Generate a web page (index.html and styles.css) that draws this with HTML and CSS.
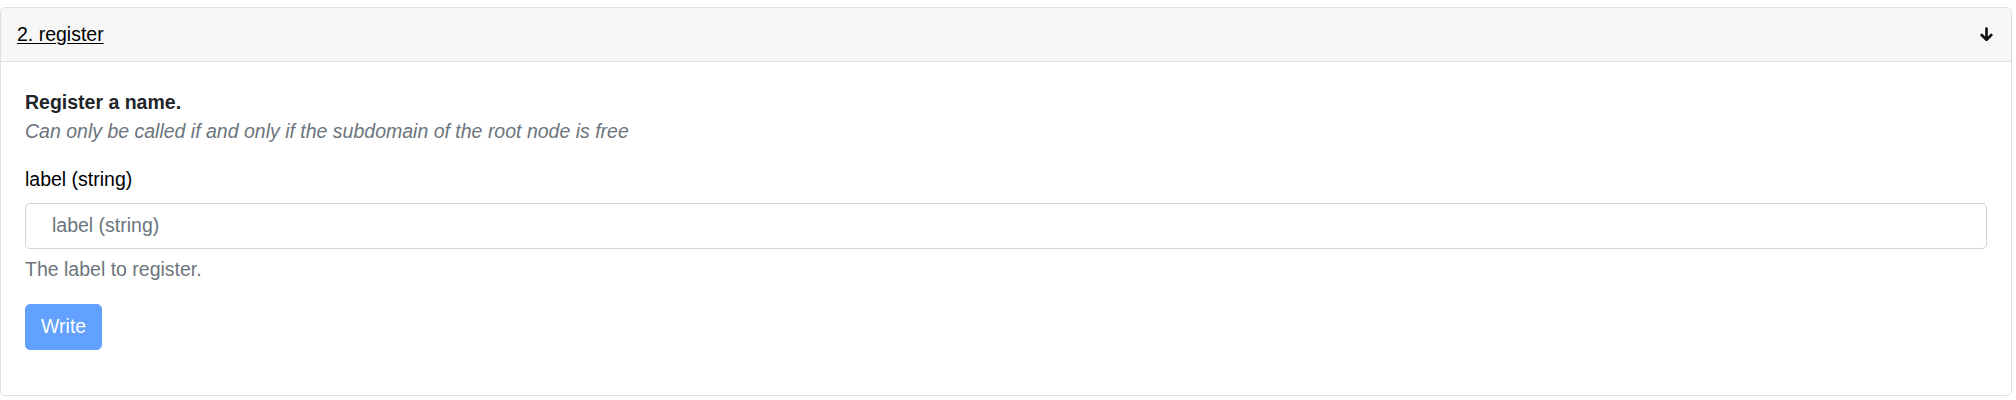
FILE: index.html
```html
<!DOCTYPE html>
<html lang="en">
<head>
<meta charset="utf-8">
<title>register</title>
<link rel="stylesheet" href="styles.css">
</head>
<body>
<div class="page">
  <div class="card">
    <div class="card-header">
      <a class="title" href="#">2. register</a>
      <svg class="arrow" width="15" height="15" viewBox="0 0 14 14" aria-hidden="true">
        <path d="M7 1.5 V12 M2.5 7.5 L7 12 L11.5 7.5" fill="none" stroke="#111" stroke-width="2.5" stroke-linecap="round" stroke-linejoin="round"/>
      </svg>
    </div>
    <div class="card-body">
      <p class="desc"><strong>Register a name.</strong><br><em>Can only be called if and only if the subdomain of the root node is free</em></p>
      <form class="form">
        <label class="form-label" for="label">label (string)</label>
        <input class="form-control" id="label" type="text" placeholder="label (string)">
        <div class="form-text">The label to register.</div>
        <button class="btn" type="button" disabled>Write</button>
      </form>
    </div>
  </div>
</div>
</body>
</html>
```
FILE: styles.css
```css
html, body {
  margin: 0;
  padding: 0;
  background: #fff;
}
body {
  font-family: "Liberation Sans", Arial, Helvetica, sans-serif;
  font-size: 19.5px;
  line-height: 1.5;
  color: #212529;
}
.page {
  padding: 7px 4px 0 0;
}
.card {
  border: 1px solid #dfdfdf;
  border-radius: 5px;
  height: 389px;
  box-sizing: border-box;
  overflow: hidden;
}
.card-header {
  display: flex;
  align-items: center;
  justify-content: space-between;
  height: 54px;
  box-sizing: border-box;
  padding: 0 17px 0 16px;
  background: #f7f7f8;
  border-bottom: 1px solid #dfdfdf;
}
.title {
  color: #000;
  text-decoration: underline;
  text-underline-offset: 2px;
  padding-top: 1px;
}
.arrow {
  display: block;
}
.card-body {
  padding: 26px 24px 24px 24px;
}
.desc {
  margin: 0 0 18px 0;
}
.desc strong {
  font-weight: bold;
  color: #212529;
}
.desc em {
  font-style: italic;
  color: #6c757d;
}
.form {
  display: flex;
  flex-direction: column;
  align-items: flex-start;
}
.form-label {
  display: block;
  color: #000;
  margin-bottom: 9px;
}
.form-control {
  display: block;
  width: 100%;
  box-sizing: border-box;
  height: 46px;
  padding: 7px 14px 7px 26px;
  font-family: inherit;
  font-size: 19.5px;
  line-height: 1.5;
  color: #212529;
  border: 1px solid #ced4da;
  border-radius: 5px;
  background: #fff;
  outline: none;
}
.form-control::placeholder {
  color: #6c757d;
  opacity: 1;
}
.form-text {
  margin-top: 6px;
  color: #6c757d;
}
.btn {
  margin-top: 20px;
  height: 46px;
  padding: 0 15px;
  font-family: inherit;
  font-size: 19.5px;
  line-height: 1.5;
  color: #fff;
  background: #62a1fe;
  border: 1px solid #62a1fe;
  border-radius: 5px;
}
```
